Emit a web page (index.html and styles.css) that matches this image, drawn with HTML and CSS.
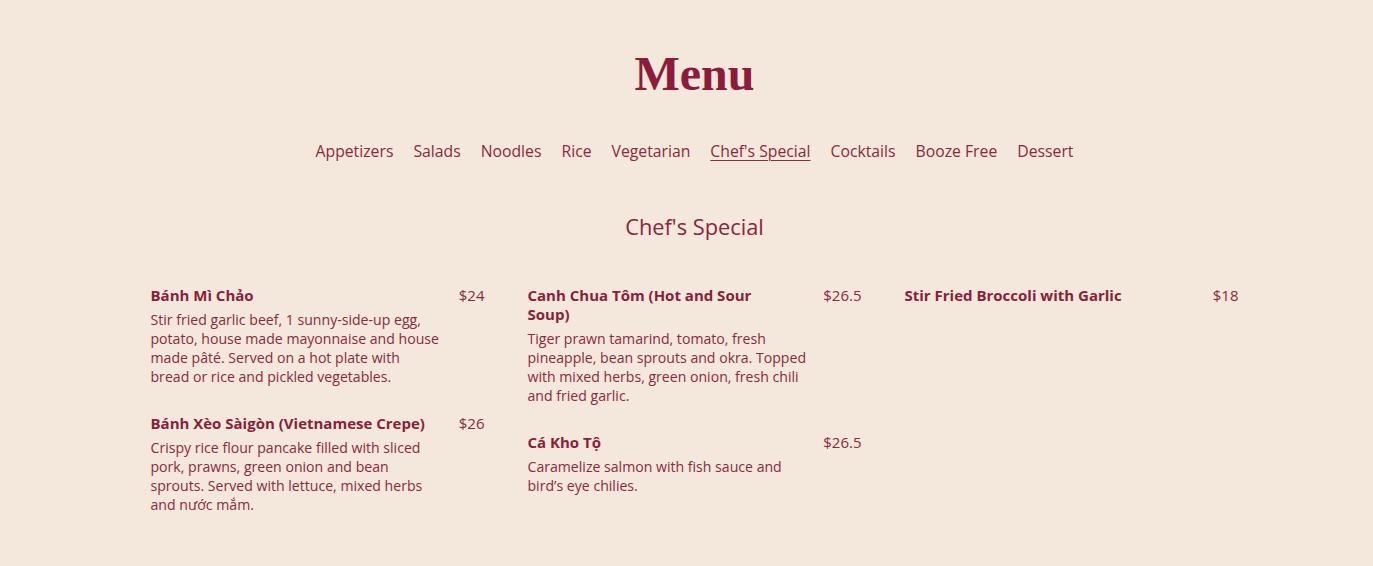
FILE: index.html
```html
<!DOCTYPE html>
<html lang="en">
<head>
<meta charset="utf-8">
<title>Menu</title>
<link rel="stylesheet" href="styles.css">
</head>
<body>
<div class="page">
  <h1 class="title">Menu</h1>
  <nav class="tabs">
    <a class="tab">Appetizers</a>
    <a class="tab">Salads</a>
    <a class="tab">Noodles</a>
    <a class="tab">Rice</a>
    <a class="tab">Vegetarian</a>
    <a class="tab active">Chef's Special</a>
    <a class="tab">Cocktails</a>
    <a class="tab">Booze Free</a>
    <a class="tab">Dessert</a>
  </nav>
  <h2 class="section-title">Chef's Special</h2>
  <div class="grid">
    <div class="col">
      <div class="item">
        <div class="item-head"><span class="name">Bánh Mì Chảo</span><span class="price">$24</span></div>
        <p class="desc">Stir fried garlic beef, 1 sunny-side-up egg, potato, house made mayonnaise and house made pâté. Served on a hot plate with bread or rice and pickled vegetables.</p>
      </div>
      <div class="item">
        <div class="item-head"><span class="name">Bánh Xèo Sàigòn (Vietnamese Crepe)</span><span class="price">$26</span></div>
        <p class="desc">Crispy rice flour pancake filled with sliced pork, prawns, green onion and bean sprouts. Served with lettuce, mixed herbs and nước mắm.</p>
      </div>
    </div>
    <div class="col">
      <div class="item">
        <div class="item-head"><span class="name">Canh Chua Tôm (Hot and Sour Soup)</span><span class="price">$26.5</span></div>
        <p class="desc">Tiger prawn tamarind, tomato, fresh pineapple, bean sprouts and okra. Topped with mixed herbs, green onion, fresh chili and fried garlic.</p>
      </div>
      <div class="item">
        <div class="item-head"><span class="name">Cá Kho Tộ</span><span class="price">$26.5</span></div>
        <p class="desc">Caramelize salmon with fish sauce and bird’s eye chilies.</p>
      </div>
    </div>
    <div class="col">
      <div class="item">
        <div class="item-head"><span class="name">Stir Fried Broccoli with Garlic</span><span class="price">$18</span></div>
      </div>
    </div>
  </div>
</div>
</body>
</html>
```

FILE: styles.css
```css
html, body {
  margin: 0;
  padding: 0;
  background: #f4e7db;
}
body {
  font-family: "Open Sans", Lato, Arial, sans-serif;
  color: #8a2540;
}
.page {
  padding: 50px 0 40px 16px;
  display: flex;
  flex-direction: column;
  align-items: center;
}
.title {
  margin: 0;
  font-family: "Liberation Serif", "Times New Roman", serif;
  font-weight: bold;
  font-size: 48px;
  line-height: 48px;
  color: #8c1c3c;
}
.tabs {
  margin-top: 43px;
  display: flex;
  gap: 20px;
  font-size: 15.75px;
  line-height: 20px;
}
.tab {
  color: #8a2a3e;
  cursor: pointer;
}
.tab.active {
  text-decoration: underline;
  text-underline-offset: 3px;
  text-decoration-thickness: 1px;
}
.section-title {
  margin: 53px 0 0;
  font-weight: normal;
  font-size: 21.8px;
  line-height: 26px;
  color: #8a2540;
}
.grid {
  margin-top: 46px;
  display: grid;
  grid-template-columns: repeat(3, 334px);
  column-gap: 43px;
  align-items: start;
}
.col {
  display: flex;
  flex-direction: column;
  gap: 28px;
}
.item-head {
  display: flex;
  align-items: flex-start;
  font-size: 15px;
  line-height: 19px;
}
.name {
  flex: 1;
  font-weight: 700;
  color: #881f3c;
}
.price {
  margin-left: 28px;
  color: #8a2a3e;
}
.desc {
  margin: 5px 0 0;
  max-width: 289px;
  font-size: 14.1px;
  line-height: 19px;
  color: #8a2a42;
}
```
